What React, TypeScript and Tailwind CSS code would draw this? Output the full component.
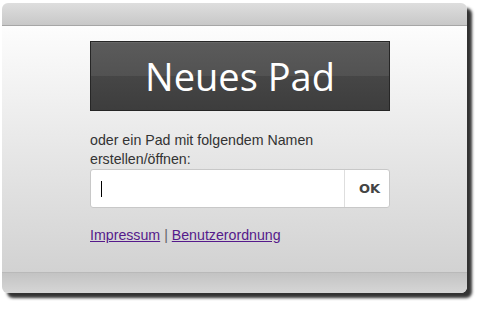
export default function App() {
  return (
    <div className="w-[482px] h-[310px] bg-white pt-[3px] pl-[2px] font-['Liberation_Sans',Arial,sans-serif]">
      <div className="w-[465px] h-[290px] rounded-[6px] overflow-hidden flex flex-col shadow-[5px_5px_3px_rgba(0,0,0,0.8)]">
        {/* title strip */}
        <div className="h-[23px] bg-linear-to-b from-[#dedede] to-[#c8c8c8] border-b border-[#a6a6a6]" />

        {/* page body */}
        <div className="flex-1 bg-linear-to-b from-[#fdfdfd] to-[#d2d2d2] pl-[88px] pt-[15px]">
          <button className="w-[300px] h-[70px] border border-[#262626] bg-[linear-gradient(#5b5b5b,#525252_50%,#464646_50%,#3d3d3d)] flex items-center justify-center text-white text-[38px] font-['Open_Sans',sans-serif] shadow-[inset_0_1px_0_rgba(255,255,255,0.08)]">
            Neues Pad
          </button>

          <p className="mt-[20px] text-[14.2px] leading-[19px] text-[#333]">
            oder ein Pad mit folgendem Namen
            <br />
            erstellen/öffnen:
          </p>

          <div className="w-[300px] h-[39px] flex bg-white border border-[#c8c8c8] rounded-[3px]">
            <div className="flex-1 flex items-center pl-[10px]">
              <span className="w-px h-[16px] bg-black" />
            </div>
            <div className="w-[45px] border-l border-[#dedede] flex items-center pl-[14px] text-[13px] font-bold text-[#444] font-['DejaVu_Sans',sans-serif]">
              OK
            </div>
          </div>

          <div className="mt-[17px] text-[14.2px] leading-[20px] text-[#666]">
            <a href="#" className="text-[#551a8b] underline">
              Impressum
            </a>{" "}
            |{" "}
            <a href="#" className="text-[#551a8b] underline">
              Benutzerordnung
            </a>
          </div>
        </div>

        {/* bottom strip */}
        <div className="h-[21px] border-t border-[#b9b9b9] bg-linear-to-b from-[#c3c3c3] to-[#d6d6d6]" />
      </div>
    </div>
  );
}
